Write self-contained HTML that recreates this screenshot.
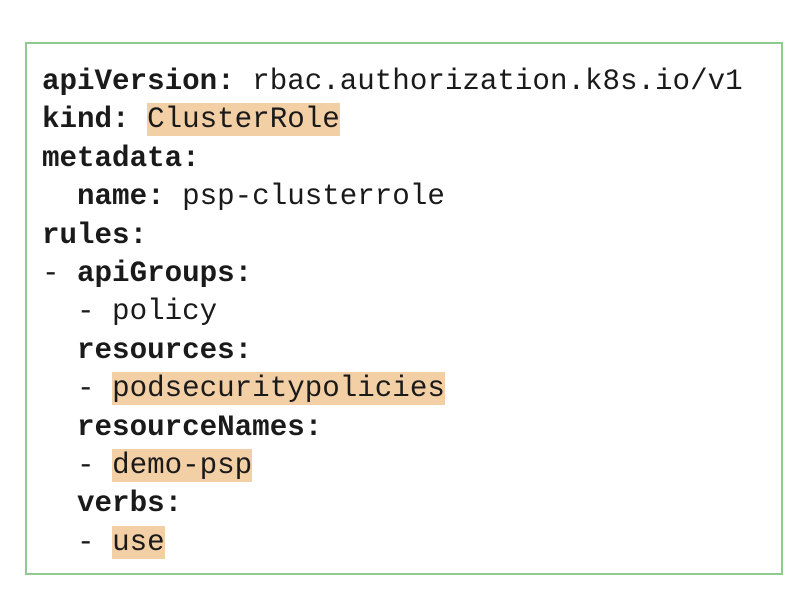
<!DOCTYPE html>
<html><head><style>
html,body{margin:0;padding:0;background:#fff;width:812px;height:602px;overflow:hidden}
.box{position:absolute;left:25px;top:42px;width:754px;height:529px;border:2px solid #8fcb8f;box-sizing:content-box}
pre{position:absolute;left:42px;top:63px;margin:0;font-family:"Liberation Mono",monospace;font-size:29.2px;line-height:38.4px;color:#1a1a1a;letter-spacing:0}
b{font-weight:bold}
.h{background:#f3cfa6}
</style></head><body>
<div class="box"></div>
<pre><b>apiVersion:</b> rbac.authorization.k8s.io/v1
<b>kind:</b> <span class="h">ClusterRole</span>
<b>metadata:</b>
  <b>name:</b> psp-clusterrole
<b>rules:</b>
- <b>apiGroups:</b>
  - policy
  <b>resources:</b>
  - <span class="h">podsecuritypolicies</span>
  <b>resourceNames:</b>
  - <span class="h">demo-psp</span>
  <b>verbs:</b>
  - <span class="h">use</span></pre>
</body></html>
